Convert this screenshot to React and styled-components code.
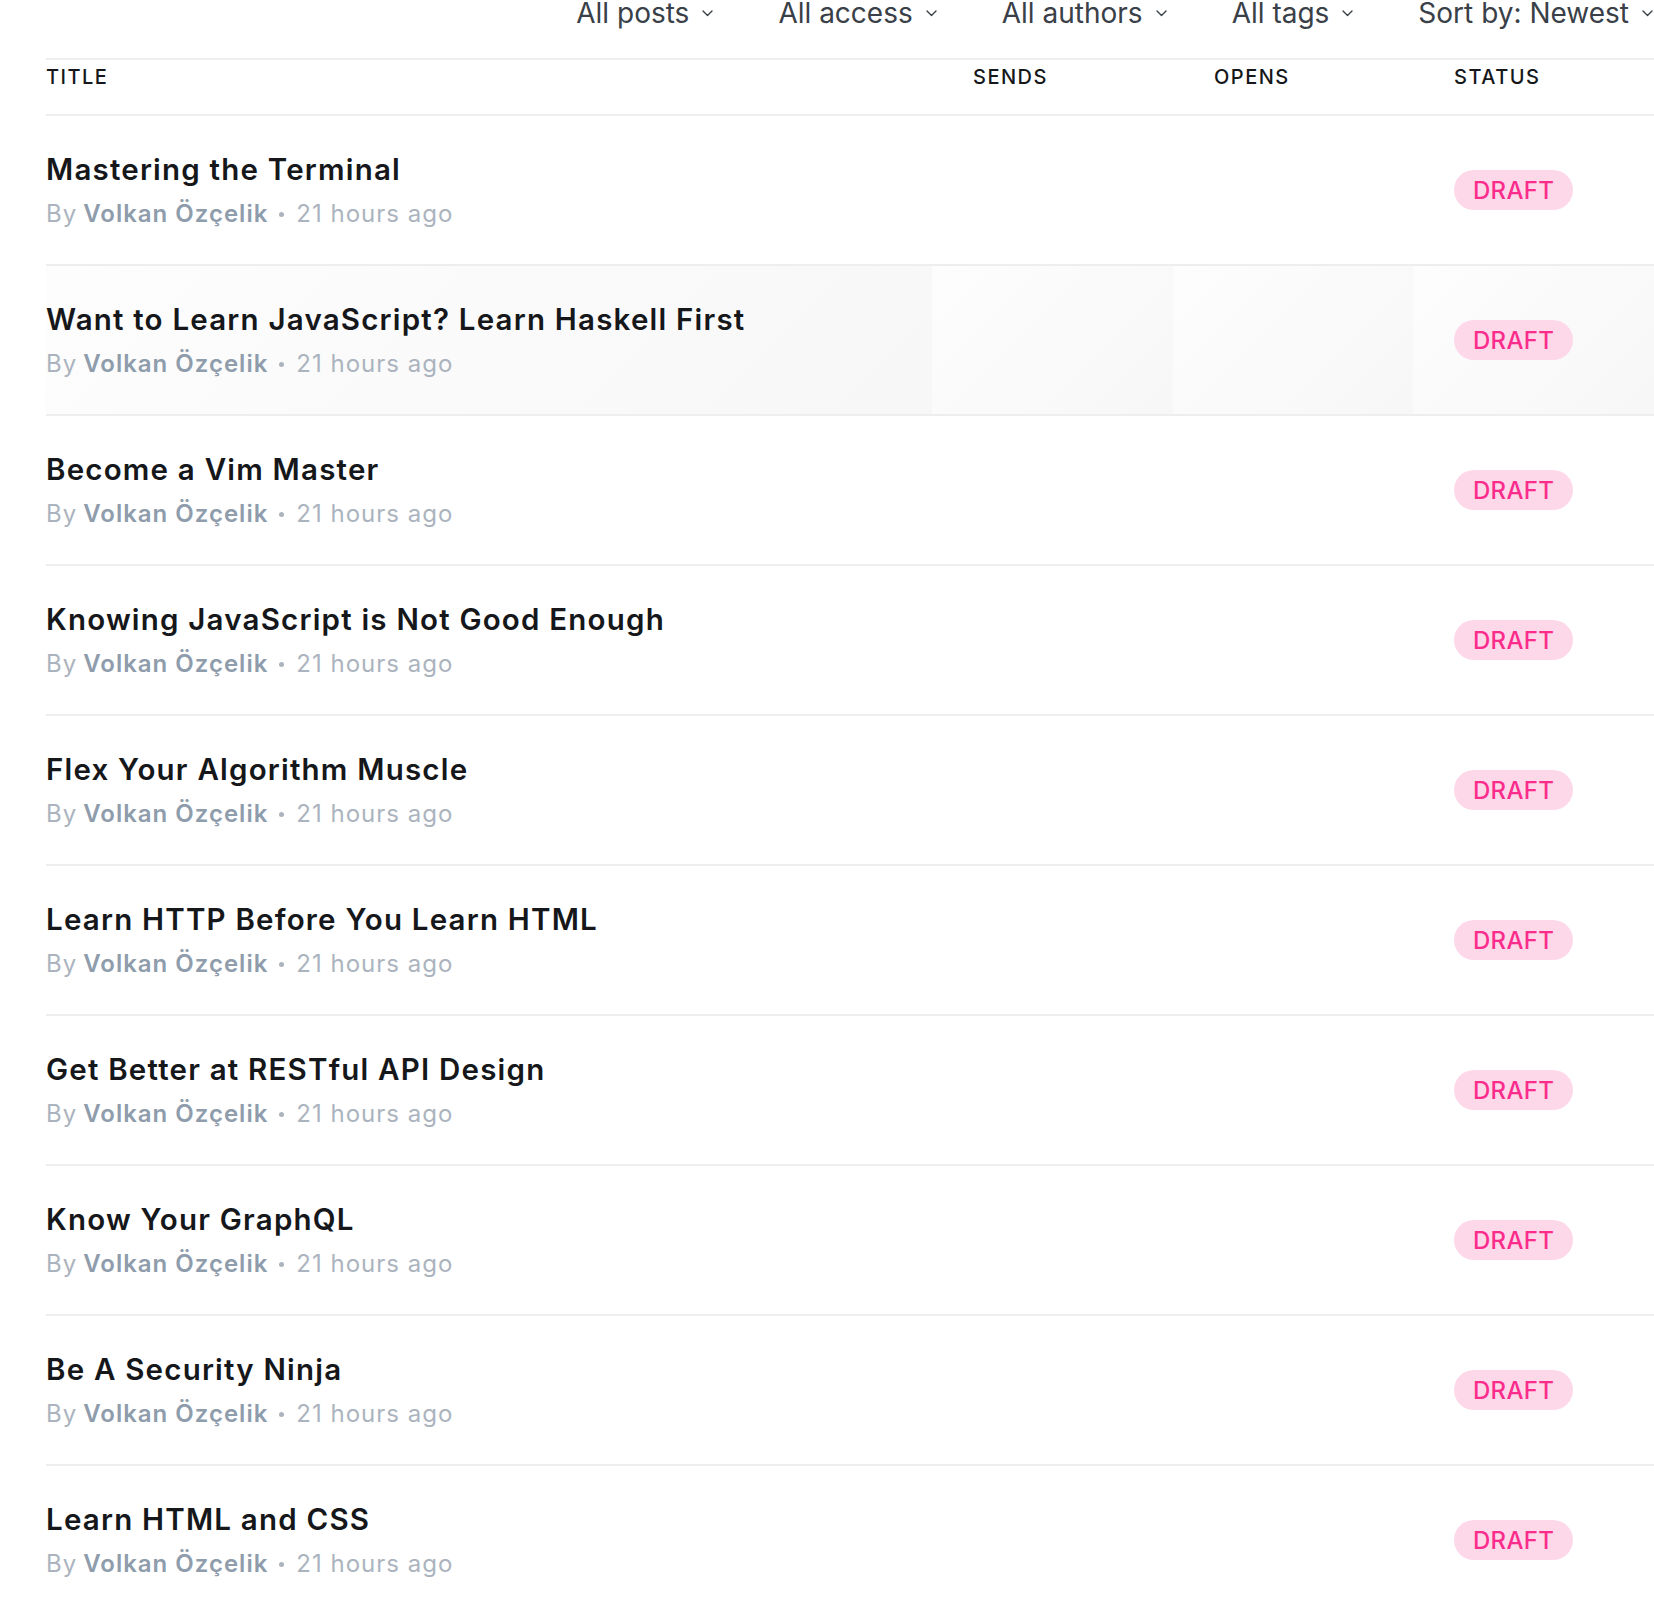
import React from 'react';
import styled, { createGlobalStyle } from 'styled-components';

const GlobalStyle = createGlobalStyle`
  html, body {
    margin: 0;
    padding: 0;
    background: #ffffff;
    overflow: hidden;
  }
  body {
    font-family: Inter, "Noto Sans", "Liberation Sans", sans-serif;
    color: #15171a;
    -webkit-font-smoothing: antialiased;
  }
`;

const posts = [
  'Mastering the Terminal',
  'Want to Learn JavaScript? Learn Haskell First',
  'Become a Vim Master',
  'Knowing JavaScript is Not Good Enough',
  'Flex Your Algorithm Muscle',
  'Learn HTTP Before You Learn HTML',
  'Get Better at RESTful API Design',
  'Know Your GraphQL',
  'Be A Security Ninja',
  'Learn HTML and CSS',
];

const filters = ['All posts', 'All access', 'All authors', 'All tags', 'Sort by: Newest'];

const Page = styled.div`
  padding-left: 46px;
  width: calc(100vw - 46px);
`;

const Toolbar = styled.div`
  display: flex;
  justify-content: flex-end;
  gap: 65px;
  height: 58px;
  padding-right: 1px;
`;

const Filter = styled.div`
  display: flex;
  align-items: center;
  height: 26px;
  font-size: 28px;
  line-height: 26px;
  color: #394047;
  white-space: nowrap;
  svg {
    margin-left: 13px;
    margin-top: 1px;
  }
`;

const Table = styled.div`
  border-top: 2px solid #eceef0;
`;

const HeaderRow = styled.div`
  display: grid;
  grid-template-columns: 1fr 241px 240px 241px;
  height: 54px;
  border-bottom: 2px solid #eceef0;
`;

const HeaderCell = styled.div`
  padding-top: 7px;
  padding-left: ${p => (p.$first ? '0' : '41px')};
  font-size: 20px;
  line-height: 20px;
  font-weight: 500;
  letter-spacing: 1.5px;
  text-transform: uppercase;
  color: #15171a;
`;

const Row = styled.div`
  display: grid;
  grid-template-columns: 1fr 241px 240px 241px;
  height: 148px;
  border-bottom: 2px solid #eceef0;
`;

const Cell = styled.div`
  display: flex;
  align-items: center;
  padding-left: ${p => (p.$first ? '0' : '41px')};
  background: ${p => (p.$hover ? 'linear-gradient(135deg, #fdfdfd 0%, #f7f7f8 100%)' : 'transparent')};
`;

const TitleBlock = styled.div`
  display: flex;
  flex-direction: column;
`;

const Title = styled.h3`
  margin: 0;
  font-size: 29.5px;
  line-height: 36px;
  font-weight: 600;
  color: #15171a;
  letter-spacing: 1.2px;
`;

const Meta = styled.p`
  margin: 11px 0 0;
  font-size: 24px;
  line-height: 32px;
  letter-spacing: 1px;
  color: #abb4be;
  display: flex;
  align-items: center;
`;

const Author = styled.span`
  margin-left: 6px;
  font-weight: 600;
  color: #8e9cac;
`;

const Dot = styled.span`
  width: 5px;
  height: 5px;
  border-radius: 50%;
  background: #abb4be;
  margin: 2px 12px 0 11px;
`;

const Pill = styled.span`
  display: inline-flex;
  align-items: center;
  height: 40px;
  padding: 0 19px;
  border-radius: 20px;
  background: #fdd8e9;
  color: #fb2c8c;
  font-size: 24px;
  font-weight: 500;
  letter-spacing: 0.3px;
  text-transform: uppercase;
`;

const Chevron = () => (
  <svg width="11" height="7" viewBox="0 0 11 7" fill="none">
    <polyline points="1,1 5.5,5.5 10,1" stroke="#394047" strokeWidth="1.4" strokeLinecap="round" strokeLinejoin="round" />
  </svg>
);

const App = () => {
  return (
    <Page>
      <GlobalStyle />
      <Toolbar>
        {filters.map(f => (
          <Filter key={f}>
            {f}
            <Chevron />
          </Filter>
        ))}
      </Toolbar>
      <Table>
        <HeaderRow>
          <HeaderCell $first>Title</HeaderCell>
          <HeaderCell>Sends</HeaderCell>
          <HeaderCell>Opens</HeaderCell>
          <HeaderCell>Status</HeaderCell>
        </HeaderRow>
        {posts.map((title, i) => {
          const hover = i === 1;
          return (
            <Row key={title}>
              <Cell $first $hover={hover}>
                <TitleBlock>
                  <Title>{title}</Title>
                  <Meta>
                    By<Author>Volkan Özçelik</Author>
                    <Dot />
                    21 hours ago
                  </Meta>
                </TitleBlock>
              </Cell>
              <Cell $hover={hover} />
              <Cell $hover={hover} />
              <Cell $hover={hover}>
                <Pill>Draft</Pill>
              </Cell>
            </Row>
          );
        })}
      </Table>
    </Page>
  );
};

export default App;
